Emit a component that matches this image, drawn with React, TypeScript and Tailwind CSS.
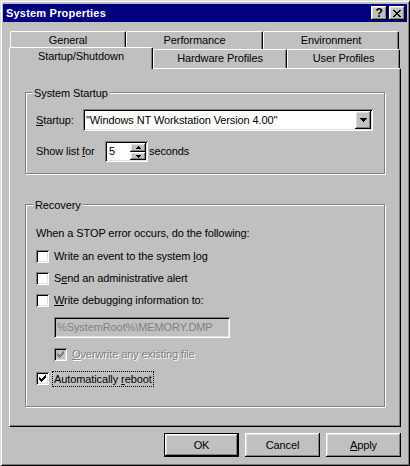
const raised =
  "shadow-[inset_-1px_-1px_0_#000,inset_1px_1px_0_#fff,inset_-2px_-2px_0_#808080,inset_2px_2px_0_#dfdfdf]";
const sunken =
  "shadow-[inset_1px_1px_0_#808080,inset_-1px_-1px_0_#fff,inset_2px_2px_0_#000,inset_-2px_-2px_0_#dfdfdf]";

function CheckMark({ color }: { color: string }) {
  const cols = [2, 3, 4, 3, 2, 1, 0];
  return (
    <svg className="absolute left-[3px] top-[3px]" width="7" height="7" viewBox="0 0 7 7" shapeRendering="crispEdges">
      {cols.map((y, x) => (
        <rect key={x} x={x} y={y} width="1" height="3" fill={color} />
      ))}
    </svg>
  );
}

function Checkbox({ checked = false, disabled = false }: { checked?: boolean; disabled?: boolean }) {
  return (
    <div className={`relative h-[13px] w-[13px] shrink-0 ${disabled ? "bg-[#c0c0c0]" : "bg-white"} ${sunken}`}>
      {checked && <CheckMark color={disabled ? "#808080" : "#000"} />}
    </div>
  );
}

function Tab({ width, selected = false, children }: { width: string; selected?: boolean; children: React.ReactNode }) {
  return (
    <div
      className={`${width} flex justify-center rounded-t-[2px] border-l border-t border-r border-white border-r-black pt-[2px] shadow-[inset_-1px_0_0_#808080] ${
        selected ? "relative z-10 -mb-[1px] h-[22px] bg-[#c0c0c0]" : "h-full"
      }`}
    >
      {children}
    </div>
  );
}

function CloseGlyph() {
  const px = [
    [0, 0], [1, 0], [6, 0], [7, 0],
    [1, 1], [2, 1], [5, 1], [6, 1],
    [2, 2], [3, 2], [4, 2], [5, 2],
    [3, 3], [4, 3],
    [2, 4], [3, 4], [4, 4], [5, 4],
    [1, 5], [2, 5], [5, 5], [6, 5],
    [0, 6], [1, 6], [6, 6], [7, 6],
  ];
  return (
    <svg width="8" height="7" viewBox="0 0 8 7" shapeRendering="crispEdges">
      {px.map(([x, y]) => (
        <rect key={`${x}-${y}`} x={x} y={y} width="1" height="1" fill="#000" />
      ))}
    </svg>
  );
}

function Button({ children, isDefault = false }: { children: React.ReactNode; isDefault?: boolean }) {
  if (isDefault) {
    return (
      <div className="h-[24px] w-[75px] border border-black">
        <div className={`flex h-full w-full items-center justify-center ${raised}`}>{children}</div>
      </div>
    );
  }
  return <div className={`flex h-[24px] w-[75px] items-center justify-center ${raised}`}>{children}</div>;
}

export default function App() {
  return (
    <div className="flex h-[466px] w-[410px] flex-col bg-[#c0c0c0] px-[3px] pt-[4px] font-['Liberation_Sans',Arial,sans-serif] text-[11px] leading-[13px] tracking-[-0.1px] text-black shadow-[inset_1px_1px_0_#dfdfdf,inset_-1px_-1px_0_#000,inset_2px_2px_0_#fff,inset_-2px_-2px_0_#808080]">
      {/* title bar */}
      <div className="flex h-[18px] items-center bg-[#000080] pl-[3px] pr-[2px]">
        <span className="flex-1 font-bold tracking-[0.2px] text-white">System Properties</span>
        <div className={`flex h-[14px] w-[16px] items-center justify-center bg-[#c0c0c0] pb-[1px] text-[12px] font-bold leading-[12px] text-black ${raised}`}>
          ?
        </div>
        <div className={`ml-[2px] flex h-[14px] w-[16px] items-center justify-center bg-[#c0c0c0] ${raised}`}>
          <CloseGlyph />
        </div>
      </div>

      {/* tabs + page */}
      <div className="ml-[6px] mt-[9px] w-[392px]">
        <div className="flex h-[18px] pl-[1px]">
          <Tab width="w-[116px]">General</Tab>
          <Tab width="w-[137px]">Performance</Tab>
          <Tab width="w-[136px]">Environment</Tab>
        </div>
        <div className="flex h-[19px] items-end">
          <Tab width="w-[144px]" selected>
            Startup/Shutdown
          </Tab>
          <Tab width="w-[134px]">Hardware Profiles</Tab>
          <Tab width="w-[113px]">User Profiles</Tab>
        </div>

        <div className="h-[359px] border border-white border-r-black border-b-black pl-[15px] pt-[23px] shadow-[inset_-1px_-1px_0_#808080]">
          {/* System Startup */}
          <div className="relative h-[82px] w-[360px] border border-[#808080] pl-[10px] pt-[16px] shadow-[1px_1px_0_#fff,inset_1px_1px_0_#fff]">
            <span className="absolute -top-[6px] left-[6px] bg-[#c0c0c0] px-[2px]">System Startup</span>
            <div className="flex h-[22px] items-center">
              <span className="w-[47px]">
                <u>S</u>tartup:
              </span>
              <div className={`flex h-[22px] w-[290px] items-center bg-white pl-[3px] pr-[2px] ${sunken}`}>
                <span className="flex-1">"Windows NT Workstation Version 4.00"</span>
                <div className={`flex h-[18px] w-[16px] items-center justify-center bg-[#c0c0c0] ${raised}`}>
                  <svg width="7" height="4" viewBox="0 0 7 4" shapeRendering="crispEdges">
                    <path d="M0 0h7v1h-1v1h-1v1h-1v1h-1v-1h-1v-1h-1v-1h-1z" fill="#000" />
                  </svg>
                </div>
              </div>
            </div>
            <div className="mt-[10px] flex h-[21px] items-center">
              <span className="w-[69px]">
                Show list <u>f</u>or
              </span>
              <div className={`flex h-[21px] w-[43px] items-center bg-white pl-[4px] pr-[2px] ${sunken}`}>
                <span className="flex-1">5</span>
                <div className="flex flex-col">
                  <div className={`flex h-[9px] w-[16px] items-center justify-center bg-[#c0c0c0] ${raised}`}>
                    <svg width="5" height="3" viewBox="0 0 5 3" shapeRendering="crispEdges">
                      <path d="M2 0h1v1h1v1h1v1h-5v-1h1v-1h1z" fill="#000" />
                    </svg>
                  </div>
                  <div className={`flex h-[8px] w-[16px] items-center justify-center bg-[#c0c0c0] ${raised}`}>
                    <svg width="5" height="3" viewBox="0 0 5 3" shapeRendering="crispEdges">
                      <path d="M0 0h5v1h-1v1h-1v1h-1v-1h-1v-1h-1z" fill="#000" />
                    </svg>
                  </div>
                </div>
              </div>
              <span className="ml-[1px]">seconds</span>
            </div>
          </div>

          {/* Recovery */}
          <div className="relative mt-[30px] h-[203px] w-[360px] border border-[#808080] pl-[10px] pt-[22px] shadow-[1px_1px_0_#fff,inset_1px_1px_0_#fff]">
            <span className="absolute -top-[6px] left-[7px] bg-[#c0c0c0] px-[2px]">Recovery</span>
            <p>When a STOP error occurs, do the following:</p>
            <div className="mt-[10px] flex flex-col gap-[9px]">
              <div className="flex h-[13px] items-center">
                <Checkbox />
                <span className="ml-[5px]">
                  Write an event to the system <u>l</u>og
                </span>
              </div>
              <div className="flex h-[13px] items-center">
                <Checkbox />
                <span className="ml-[5px]">
                  S<u>e</u>nd an administrative alert
                </span>
              </div>
              <div className="flex h-[13px] items-center">
                <Checkbox />
                <span className="ml-[5px]">
                  <u>W</u>rite debugging information to:
                </span>
              </div>
            </div>
            <div className={`ml-[18px] mt-[10px] flex h-[21px] w-[176px] items-center pl-[3px] text-[#808080] ${sunken}`}>
              %SystemRoot%\MEMORY.DMP
            </div>
            <div className="ml-[18px] mt-[10px] flex h-[13px] items-center">
              <Checkbox checked disabled />
              <span className="ml-[5px] text-[#808080] [text-shadow:1px_1px_0_#fff]">
                <u>O</u>verwrite any existing file
              </span>
            </div>
            <div className="mt-[11px] flex h-[13px] items-center">
              <Checkbox checked />
              <div className="ml-[3px] h-[16px] border border-dotted border-black px-[1px] leading-[14px]">
                <span>
                  Automatically <u>r</u>eboot
                </span>
              </div>
            </div>
          </div>
        </div>
      </div>

      {/* dialog buttons */}
      <div className="mr-[6px] mt-[6px] flex justify-end gap-[6px]">
        <Button isDefault>OK</Button>
        <Button>Cancel</Button>
        <Button>
          <span>
            <u>A</u>pply
          </span>
        </Button>
      </div>
    </div>
  );
}
